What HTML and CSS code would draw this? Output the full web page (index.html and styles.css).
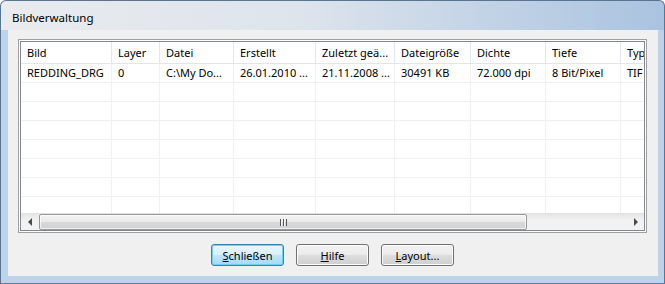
FILE: index.html
```html
<!DOCTYPE html>
<html lang="de">
<head>
    <meta charset="UTF-8">
    <title>Bildverwaltung</title>
    <link rel="stylesheet" href="styles.css">
</head>
<body>
    <div class="window">
        <div class="caption">Bildverwaltung</div>
        <div class="client">
            <div class="listview">
                <div class="list-inner">
                    <div class="grid">
                        <div class="row header">
                            <div class="cell">Bild</div>
                            <div class="cell">Layer</div>
                            <div class="cell">Datei</div>
                            <div class="cell">Erstellt</div>
                            <div class="cell">Zuletzt geä...</div>
                            <div class="cell">Dateigröße</div>
                            <div class="cell">Dichte</div>
                            <div class="cell">Tiefe</div>
                            <div class="cell">Typ</div>
                        </div>
                        <div class="row">
                            <div class="cell">REDDING_DRG</div>
                            <div class="cell">0</div>
                            <div class="cell">C:\My Do...</div>
                            <div class="cell">26.01.2010 ...</div>
                            <div class="cell">21.11.2008 ...</div>
                            <div class="cell">30491 KB</div>
                            <div class="cell">72.000 dpi</div>
                            <div class="cell">8 Bit/Pixel</div>
                            <div class="cell">TIF</div>
                        </div>
                        <!-- leere Zeilen -->
                        <div class="row"><div class="cell"></div><div class="cell"></div><div class="cell"></div><div class="cell"></div><div class="cell"></div><div class="cell"></div><div class="cell"></div><div class="cell"></div><div class="cell"></div></div>
                        <div class="row"><div class="cell"></div><div class="cell"></div><div class="cell"></div><div class="cell"></div><div class="cell"></div><div class="cell"></div><div class="cell"></div><div class="cell"></div><div class="cell"></div></div>
                        <div class="row"><div class="cell"></div><div class="cell"></div><div class="cell"></div><div class="cell"></div><div class="cell"></div><div class="cell"></div><div class="cell"></div><div class="cell"></div><div class="cell"></div></div>
                        <div class="row"><div class="cell"></div><div class="cell"></div><div class="cell"></div><div class="cell"></div><div class="cell"></div><div class="cell"></div><div class="cell"></div><div class="cell"></div><div class="cell"></div></div>
                        <div class="row"><div class="cell"></div><div class="cell"></div><div class="cell"></div><div class="cell"></div><div class="cell"></div><div class="cell"></div><div class="cell"></div><div class="cell"></div><div class="cell"></div></div>
                        <div class="row"><div class="cell"></div><div class="cell"></div><div class="cell"></div><div class="cell"></div><div class="cell"></div><div class="cell"></div><div class="cell"></div><div class="cell"></div><div class="cell"></div></div>
                        <div class="row"><div class="cell"></div><div class="cell"></div><div class="cell"></div><div class="cell"></div><div class="cell"></div><div class="cell"></div><div class="cell"></div><div class="cell"></div><div class="cell"></div></div>
                    </div>
                    <div class="hscroll">
                        <div class="arrow-btn"><span class="arrow-left"></span></div>
                        <div class="thumb"><span class="grip"></span></div>
                        <div class="track"></div>
                        <div class="arrow-btn"><span class="arrow-right"></span></div>
                    </div>
                </div>
            </div>
            <div class="buttons">
                <button class="btn default"><u>S</u>chließen</button>
                <button class="btn"><u>H</u>ilfe</button>
                <button class="btn"><u>L</u>ayout...</button>
            </div>
        </div>
    </div>
</body>
</html>
```

FILE: styles.css
```css
body {
    margin: 0;
    background: #fff;
    font-family: "Noto Sans", "Open Sans", sans-serif;
    font-size: 11px;
    color: #000;
}

.window {
    width: 665px;
    height: 284px;
    box-sizing: border-box;
    border: 1px solid #5a7592;
    border-bottom-color: #3b8fb6;
    border-radius: 6px 6px 0 0;
    padding: 0 6px 7px 7px;
    display: flex;
    flex-direction: column;
    background:
        linear-gradient(90deg, #e9ebee 0%, #dde4ec 45%, #aac3e0 100%) top / 100% 29px no-repeat,
        #bcd3ea;
}

.caption {
    height: 29px;
    box-sizing: border-box;
    padding: 9px 0 0 4px;
    line-height: 16px;
    font-size: 11.5px;
}

.client {
    flex: 1;
    background: #f0f0f0;
    padding: 9px 11px 10px 10px;
    display: flex;
    flex-direction: column;
}

.listview {
    height: 194px;
    box-sizing: border-box;
    border: 1px solid #a0a0a0;
    padding: 1px;
    background: #fff;
}

.list-inner {
    height: 100%;
    box-sizing: border-box;
    border: 1px solid #828790;
    display: flex;
    flex-direction: column;
    overflow: hidden;
}

.grid {
    flex: 1;
    overflow: hidden;
    background: #fff;
}

.row {
    display: grid;
    grid-template-columns: 91px 48px 74px 82px 79px 76px 75px 75px 75px;
    height: 19px;
    box-sizing: border-box;
    border-bottom: 1px solid #f0f0f0;
}

.cell {
    padding-left: 6px;
    border-right: 1px solid #f0f0f0;
    line-height: 18px;
    white-space: nowrap;
    overflow: hidden;
}

.header {
    height: 22px;
    border-bottom-color: #e5e5e5;
}

.header .cell {
    line-height: 21px;
    border-right-color: #e3e6ea;
}

.hscroll {
    height: 17px;
    display: flex;
    background: linear-gradient(#e6e6e6, #f2f2f2 40%, #f2f2f2);
    border-top: 1px solid #e2e2e2;
    box-sizing: border-box;
}

.arrow-btn {
    width: 17px;
    display: flex;
    align-items: center;
    justify-content: center;
}

.arrow-left {
    border-right: 4px solid #4a4a4a;
    border-top: 4px solid transparent;
    border-bottom: 4px solid transparent;
}

.arrow-right {
    border-left: 4px solid #4a4a4a;
    border-top: 4px solid transparent;
    border-bottom: 4px solid transparent;
}

.thumb {
    width: 488px;
    margin-left: 1px;
    box-sizing: border-box;
    border: 1px solid #979797;
    border-radius: 2px;
    background: linear-gradient(#f4f4f4, #e9e9e9 50%, #d9d9d9 51%, #d2d2d2);
    box-shadow: inset 0 0 0 1px rgba(255, 255, 255, 0.7);
    display: flex;
    align-items: center;
    justify-content: center;
}

.grip {
    width: 7px;
    height: 7px;
    background: repeating-linear-gradient(90deg, #555 0 1px, #f8f8f8 1px 2px, transparent 2px 3px);
}

.track {
    flex: 1;
}

.buttons {
    margin-top: 11px;
    display: flex;
    justify-content: center;
    gap: 12px;
}

.btn {
    width: 73px;
    height: 22px;
    padding: 0;
    font: inherit;
    color: #000;
    border: 1px solid #707070;
    border-radius: 3px;
    background: linear-gradient(#f2f2f2, #ebebeb 50%, #dddddd 51%, #cfcfcf);
    box-shadow: inset 0 0 0 1px #fcfcfc;
}

.btn.default {
    border-color: #3c7fb1;
    background: linear-gradient(#eaf6fd, #d9f0fc 50%, #bee6fd 51%, #a7d9f5);
    box-shadow: inset 0 0 0 1px #6ad0f5;
}
```
